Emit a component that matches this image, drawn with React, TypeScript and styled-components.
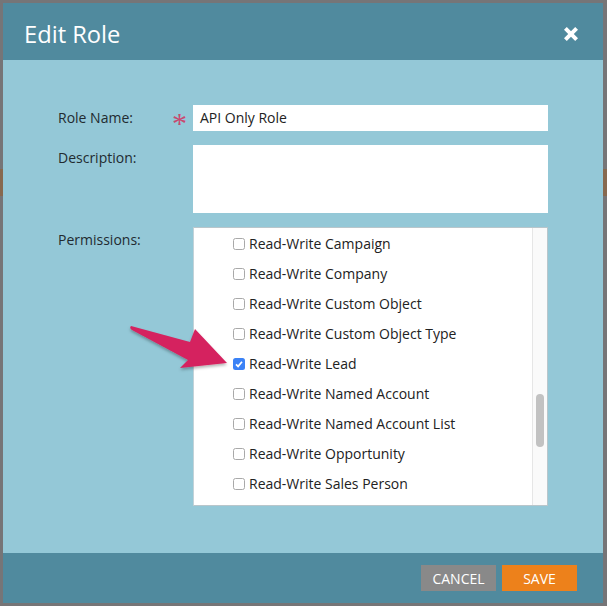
import React from "react";
import styled, { createGlobalStyle } from "styled-components";

const Global = createGlobalStyle`
  html, body { margin: 0; padding: 0; background: #767577; }
  body { font-family: "Open Sans", "Liberation Sans", sans-serif; }
`;

const Page = styled.div`
  position: relative;
  width: 607px;
  height: 606px;
  overflow: hidden;
  background: #767577;
`;

const BackdropBand = styled.div`
  position: absolute;
  left: 0;
  right: 0;
  top: 169px;
  height: 27px;
  background: #87694f;
`;

const Dialog = styled.div`
  position: absolute;
  left: 3px;
  top: 3px;
  width: 600px;
  height: 600px;
  display: flex;
  flex-direction: column;
  background: #94c8d7;
`;

const Header = styled.div`
  height: 57px;
  flex: none;
  box-sizing: border-box;
  display: flex;
  align-items: center;
  justify-content: space-between;
  padding: 4px 24px 0 21px;
  background: #508a9e;
`;

const Title = styled.h1`
  margin: 2px 0 0;
  font-size: 23.7px;
  font-weight: 400;
  line-height: 51px;
  color: #fff;
`;

const Close = styled.button`
  width: 16px;
  height: 16px;
  padding: 0;
  border: 0;
  background: none;
  display: block;
  svg { display: block; }
`;

const Body = styled.div`
  flex: 1;
  display: grid;
  grid-template-columns: 135px 355px;
  grid-template-rows: 26px 68px 279px;
  row-gap: 14px;
  padding: 45px 0 0 55px;
  box-sizing: border-box;
  align-content: start;
`;

const Label = styled.label`
  font-size: 14px;
  line-height: 26px;
  color: #222b30;
  position: relative;
  display: block;
`;

const Required = styled.span`
  position: absolute;
  left: 114px;
  top: 3px;
  font-family: "Liberation Serif", serif;
  font-size: 30px;
  line-height: 30px;
  color: #c9486f;
`;

const NameInput = styled.div`
  background: #fff;
  font-size: 14px;
  line-height: 26px;
  padding-left: 7px;
  color: #222;
`;

const DescInput = styled.div`
  background: #fff;
`;

const PermBox = styled.div`
  width: 355px;
  height: 279px;
  box-sizing: border-box;
  background: #fff;
  border: 1px solid #b9c6cb;
  border-left-color: #c2d2d8;
  display: flex;
`;

const PermList = styled.ul`
  flex: 1;
  list-style: none;
  margin: 0;
  padding: 0 0 0 39px;
  overflow: hidden;
`;

const PermRow = styled.li`
  display: flex;
  align-items: center;
  height: 30px;
  gap: 4px;
  font-size: 14px;
  color: #222;
`;

const Check = styled.span<{ $on?: boolean }>`
  width: 12px;
  height: 12px;
  margin-top: 1px;
  box-sizing: border-box;
  border-radius: 2.5px;
  flex: none;
  display: flex;
  align-items: center;
  justify-content: center;
  background: ${(p) => (p.$on ? "#3b82f6" : "#fff")};
  border: ${(p) => (p.$on ? "0" : "1px solid #a9a9a9")};
`;

const Track = styled.div`
  width: 15px;
  flex: none;
  box-sizing: border-box;
  position: relative;
  background: #fafafa;
  border-left: 1px solid #e6e6e6;
`;

const Thumb = styled.div`
  position: absolute;
  left: 3px;
  top: 166px;
  width: 8px;
  height: 53px;
  border-radius: 4px;
  background: #c2c2c2;
`;

const Footer = styled.div`
  height: 50px;
  flex: none;
  display: flex;
  justify-content: flex-end;
  align-items: flex-start;
  gap: 6px;
  padding: 12px 26px 0 0;
  box-sizing: border-box;
  background: #508a9e;
`;

const Btn = styled.button<{ $primary?: boolean }>`
  width: 75px;
  height: 26px;
  padding: 0;
  border: 0;
  font-family: inherit;
  font-size: 14px;
  color: #fff;
  background: ${(p) => (p.$primary ? "#ed811b" : "#898989")};
`;

const Arrow = styled.svg`
  position: absolute;
  left: 120px;
  top: 315px;
  overflow: visible;
`;

const perms = [
  "Read-Write Campaign",
  "Read-Write Company",
  "Read-Write Custom Object",
  "Read-Write Custom Object Type",
  "Read-Write Lead",
  "Read-Write Named Account",
  "Read-Write Named Account List",
  "Read-Write Opportunity",
  "Read-Write Sales Person",
];

export default function App() {
  return (
    <Page>
      <Global />
      <BackdropBand />
      <Dialog>
        <Header>
          <Title>Edit Role</Title>
          <Close aria-label="Close">
            <svg width="16" height="16" viewBox="0 0 16 16">
              <path d="M3.8 1 8 5.2 12.2 1 15 3.8 10.8 8 15 12.2 12.2 15 8 10.8 3.8 15 1 12.2 5.2 8 1 3.8Z" fill="#fff" />
            </svg>
          </Close>
        </Header>
        <Body>
          <Label>
            Role Name:
            <Required>*</Required>
          </Label>
          <NameInput>API Only Role</NameInput>
          <Label>Description:</Label>
          <DescInput />
          <Label>Permissions:</Label>
          <PermBox>
            <PermList>
              {perms.map((p) => (
                <PermRow key={p}>
                  <Check $on={p === "Read-Write Lead"}>
                    {p === "Read-Write Lead" && (
                      <svg width="10" height="10" viewBox="0 0 10 10">
                        <path d="M2 5.3 4.1 7.4 8 2.8" fill="none" stroke="#fff" strokeWidth="1.7" />
                      </svg>
                    )}
                  </Check>
                  {p}
                </PermRow>
              ))}
            </PermList>
            <Track>
              <Thumb />
            </Track>
          </PermBox>
        </Body>
        <Footer>
          <Btn>CANCEL</Btn>
          <Btn $primary>SAVE</Btn>
        </Footer>
      </Dialog>
      <Arrow width="110" height="60" viewBox="0 0 110 60">
        <defs>
          <filter id="arrowShadow" x="-20%" y="-20%" width="140%" height="150%">
            <feDropShadow dx="0" dy="2" stdDeviation="1.5" floodColor="#000" floodOpacity="0.3" />
          </filter>
        </defs>
        <path
          d="M11 11 Q9 13 12 15 L68 45 L60 53 L107 48 L75 14 L70 27 Z"
          fill="#d5225f"
          filter="url(#arrowShadow)"
        />
      </Arrow>
    </Page>
  );
}
